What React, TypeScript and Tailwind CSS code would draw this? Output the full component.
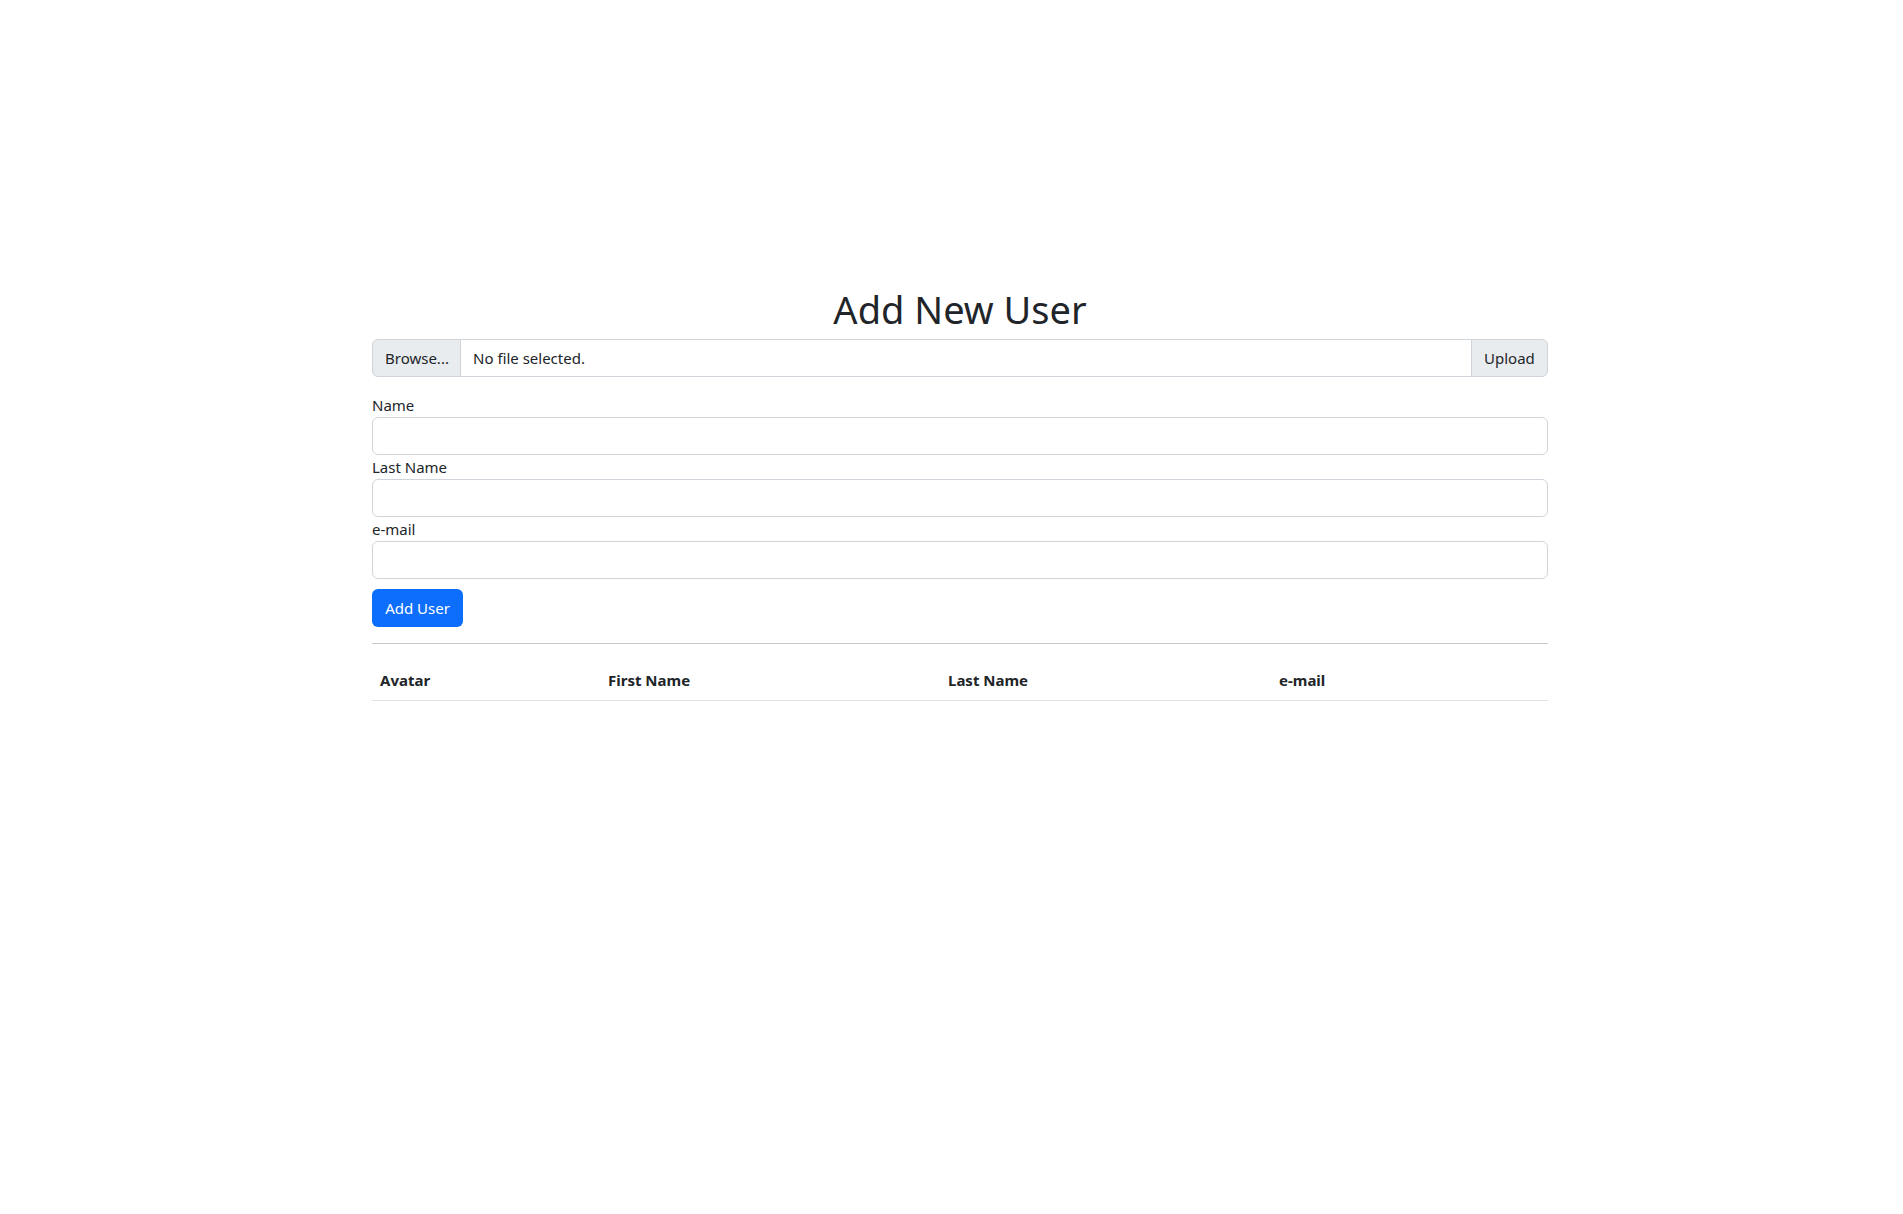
import React from "react";

export default function App() {
  const font = { fontFamily: '"Noto Sans", "Open Sans", sans-serif' };
  return (
    <div className="min-h-[1214px] bg-white text-[#212529] pl-[17px] flex justify-center" style={font}>
      <div className="w-[1176px] pt-[291px]">
        <h1 className="text-[38px] leading-[36px] pb-[12px] text-center font-normal m-0">Add New User</h1>
        <div className="flex h-[38px] text-[15px] leading-[24px] mb-4">
          <div className="flex items-center px-3 bg-[#e9ecef] border border-[#ced4da] rounded-l-[6px] w-[89px]">Browse...</div>
          <div className="flex-1 flex items-center px-3 border-y border-[#ced4da]">No file selected.</div>
          <div className="flex items-center px-3 bg-[#e9ecef] border border-[#ced4da] rounded-r-[6px] w-[77px]">Upload</div>
        </div>
        <div className="flex flex-col text-[15px] leading-[24px]">
          <label>Name</label>
          <input className="h-[38px] border border-[#ced4da] rounded-[6px] px-3 outline-none" />
          <label>Last Name</label>
          <input className="h-[38px] border border-[#ced4da] rounded-[6px] px-3 outline-none" />
          <label>e-mail</label>
          <input className="h-[38px] border border-[#ced4da] rounded-[6px] px-3 outline-none" />
        </div>
        <button className="mt-[10px] h-[38px] w-[91px] bg-[#0d6efd] text-white rounded-[6px] text-[15px] leading-[24px]">Add User</button>
        <div className="mt-4 mb-4 border-t border-[#c8c8c8]" />
        <table className="w-full table-fixed text-[15px] leading-[24px] border-collapse">
          <thead>
            <tr className="border-b border-[#dee2e6]">
              <th className="text-left font-bold p-2 w-[228px]">Avatar</th>
              <th className="text-left font-bold p-2 w-[340px]">First Name</th>
              <th className="text-left font-bold p-2 w-[331px]">Last Name</th>
              <th className="text-left font-bold p-2 w-[277px]">e-mail</th>
            </tr>
          </thead>
        </table>
      </div>
    </div>
  );
}
